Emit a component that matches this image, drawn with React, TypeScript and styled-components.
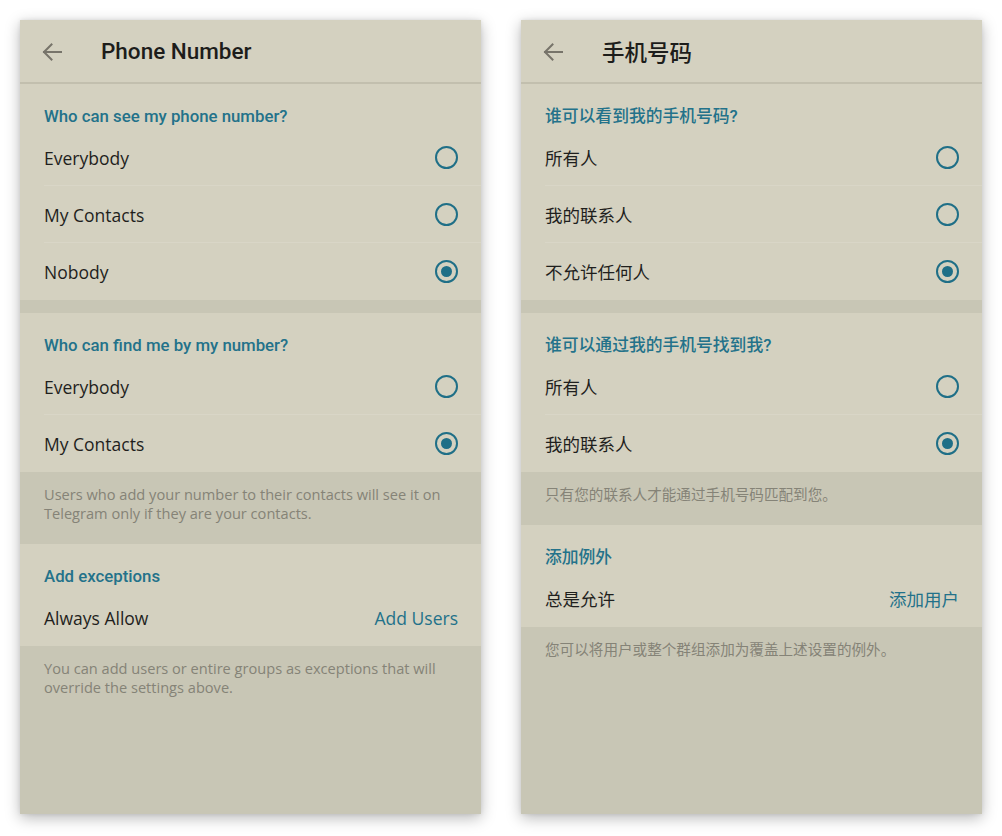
import styled, { createGlobalStyle } from "styled-components";

const GlobalStyle = createGlobalStyle`
  html, body {
    margin: 0;
    padding: 0;
    background: #ffffff;
  }
  * {
    box-sizing: border-box;
  }
`;

type Option = {
  label: string;
  checked: boolean;
};

type Screen = {
  title: string;
  seeTitle: string;
  seeOptions: Option[];
  findTitle: string;
  findOptions: Option[];
  findNote: string[];
  exceptionsTitle: string;
  alwaysAllow: string;
  addUsers: string;
  exceptionsNote: string[];
};

const screens: Screen[] = [
  {
    title: "Phone Number",
    seeTitle: "Who can see my phone number?",
    seeOptions: [
      { label: "Everybody", checked: false },
      { label: "My Contacts", checked: false },
      { label: "Nobody", checked: true },
    ],
    findTitle: "Who can find me by my number?",
    findOptions: [
      { label: "Everybody", checked: false },
      { label: "My Contacts", checked: true },
    ],
    findNote: [
      "Users who add your number to their contacts will see it on",
      "Telegram only if they are your contacts.",
    ],
    exceptionsTitle: "Add exceptions",
    alwaysAllow: "Always Allow",
    addUsers: "Add Users",
    exceptionsNote: [
      "You can add users or entire groups as exceptions that will",
      "override the settings above.",
    ],
  },
  {
    title: "手机号码",
    seeTitle: "谁可以看到我的手机号码?",
    seeOptions: [
      { label: "所有人", checked: false },
      { label: "我的联系人", checked: false },
      { label: "不允许任何人", checked: true },
    ],
    findTitle: "谁可以通过我的手机号找到我?",
    findOptions: [
      { label: "所有人", checked: false },
      { label: "我的联系人", checked: true },
    ],
    findNote: ["只有您的联系人才能通过手机号码匹配到您。"],
    exceptionsTitle: "添加例外",
    alwaysAllow: "总是允许",
    addUsers: "添加用户",
    exceptionsNote: ["您可以将用户或整个群组添加为覆盖上述设置的例外。"],
  },
];

const BackArrow = () => (
  <svg width="20" height="18" viewBox="0 0 20 18" fill="none">
    <path
      d="M19 9H2M9.5 1.5L2 9l7.5 7.5"
      stroke="#77746a"
      strokeWidth="2"
      strokeLinecap="square"
    />
  </svg>
);

const Radio = ({ checked }: { checked: boolean }) => (
  <RadioRing>{checked && <RadioDot />}</RadioRing>
);

const PhoneScreen = ({ s }: { s: Screen }) => (
  <Panel>
    <Header>
      <BackButton>
        <BackArrow />
      </BackButton>
      <Title>{s.title}</Title>
    </Header>

    <Section>
      <SectionTitle>{s.seeTitle}</SectionTitle>
      {s.seeOptions.map((o, i) => (
        <Row key={o.label} divider={i < s.seeOptions.length - 1}>
          <RowLabel>{o.label}</RowLabel>
          <Radio checked={o.checked} />
        </Row>
      ))}
    </Section>

    <Gap />

    <Section>
      <SectionTitle>{s.findTitle}</SectionTitle>
      {s.findOptions.map((o, i) => (
        <Row key={o.label} divider={i < s.findOptions.length - 1}>
          <RowLabel>{o.label}</RowLabel>
          <Radio checked={o.checked} />
        </Row>
      ))}
    </Section>

    <Note>
      {s.findNote.map((line) => (
        <div key={line}>{line}</div>
      ))}
    </Note>

    <Section>
      <SectionTitle>{s.exceptionsTitle}</SectionTitle>
      <Row divider={false}>
        <RowLabel>{s.alwaysAllow}</RowLabel>
        <LinkText>{s.addUsers}</LinkText>
      </Row>
    </Section>

    <Note>
      {s.exceptionsNote.map((line) => (
        <div key={line}>{line}</div>
      ))}
    </Note>
  </Panel>
);

export default function App() {
  return (
    <>
      <GlobalStyle />
      <Page>
        {screens.map((s) => (
          <PhoneScreen key={s.title} s={s} />
        ))}
      </Page>
    </>
  );
}

const Page = styled.div`
  display: flex;
  gap: 40px;
  padding: 20px;
  width: 1002px;
  height: 836px;
  background: #ffffff;
`;

const Panel = styled.div`
  width: 461px;
  height: 794px;
  display: flex;
  flex-direction: column;
  background: #c8c6b5;
  box-shadow: 0 4px 14px rgba(0, 0, 0, 0.28), 0 0 4px rgba(0, 0, 0, 0.08);
  overflow: hidden;
`;

const Header = styled.div`
  height: 64px;
  display: flex;
  align-items: center;
  background: #d4d1c0;
  border-bottom: 2px solid #c2bfae;
  padding-left: 22px;
`;

const BackButton = styled.div`
  width: 20px;
  height: 18px;
  display: flex;
  margin-right: 39px;
  margin-top: 1px;
`;

const Title = styled.div`
  font-family: Roboto, "Noto Sans CJK SC", sans-serif;
  font-weight: 500;
  font-size: 22.5px;
  color: #1d1d1b;
`;

const Section = styled.div`
  background: #d4d1c0;
  display: flex;
  flex-direction: column;
`;

const SectionTitle = styled.div`
  height: 45px;
  padding: 22px 24px 0;
  line-height: 20px;
  font-family: Roboto, "Noto Sans CJK SC", sans-serif;
  font-weight: 500;
  font-size: 16.8px;
  color: #23728a;
`;

const Row = styled.div<{ divider: boolean }>`
  height: 57px;
  display: flex;
  align-items: center;
  justify-content: space-between;
  padding: 0 24px 0 24px;
  position: relative;
  ${(p) =>
    p.divider &&
    `&::after {
      content: "";
      position: absolute;
      left: 24px;
      right: 0;
      bottom: 0;
      height: 1px;
      background: rgba(255, 255, 255, 0.12);
    }`}
`;

const RowLabel = styled.div`
  font-family: "Open Sans", "Noto Sans CJK SC", sans-serif;
  font-size: 17.5px;
  color: #1f1f1d;
`;

const LinkText = styled.div`
  font-family: "Open Sans", "Noto Sans CJK SC", sans-serif;
  font-size: 17.5px;
  color: #23728a;
  margin-right: -1px;
`;

const RadioRing = styled.div`
  width: 23px;
  height: 23px;
  border-radius: 50%;
  border: 2.5px solid #1f6f87;
  display: flex;
  align-items: center;
  justify-content: center;
  margin-right: -1px;
`;

const RadioDot = styled.div`
  width: 11px;
  height: 11px;
  border-radius: 50%;
  background: #1f6f87;
`;

const Gap = styled.div`
  height: 13px;
  background: #c8c6b5;
`;

const Note = styled.div`
  padding: 13px 24px 21px;
  font-family: "Open Sans", "Noto Sans CJK SC", sans-serif;
  font-size: 14.6px;
  line-height: 19px;
  color: #858377;
`;
